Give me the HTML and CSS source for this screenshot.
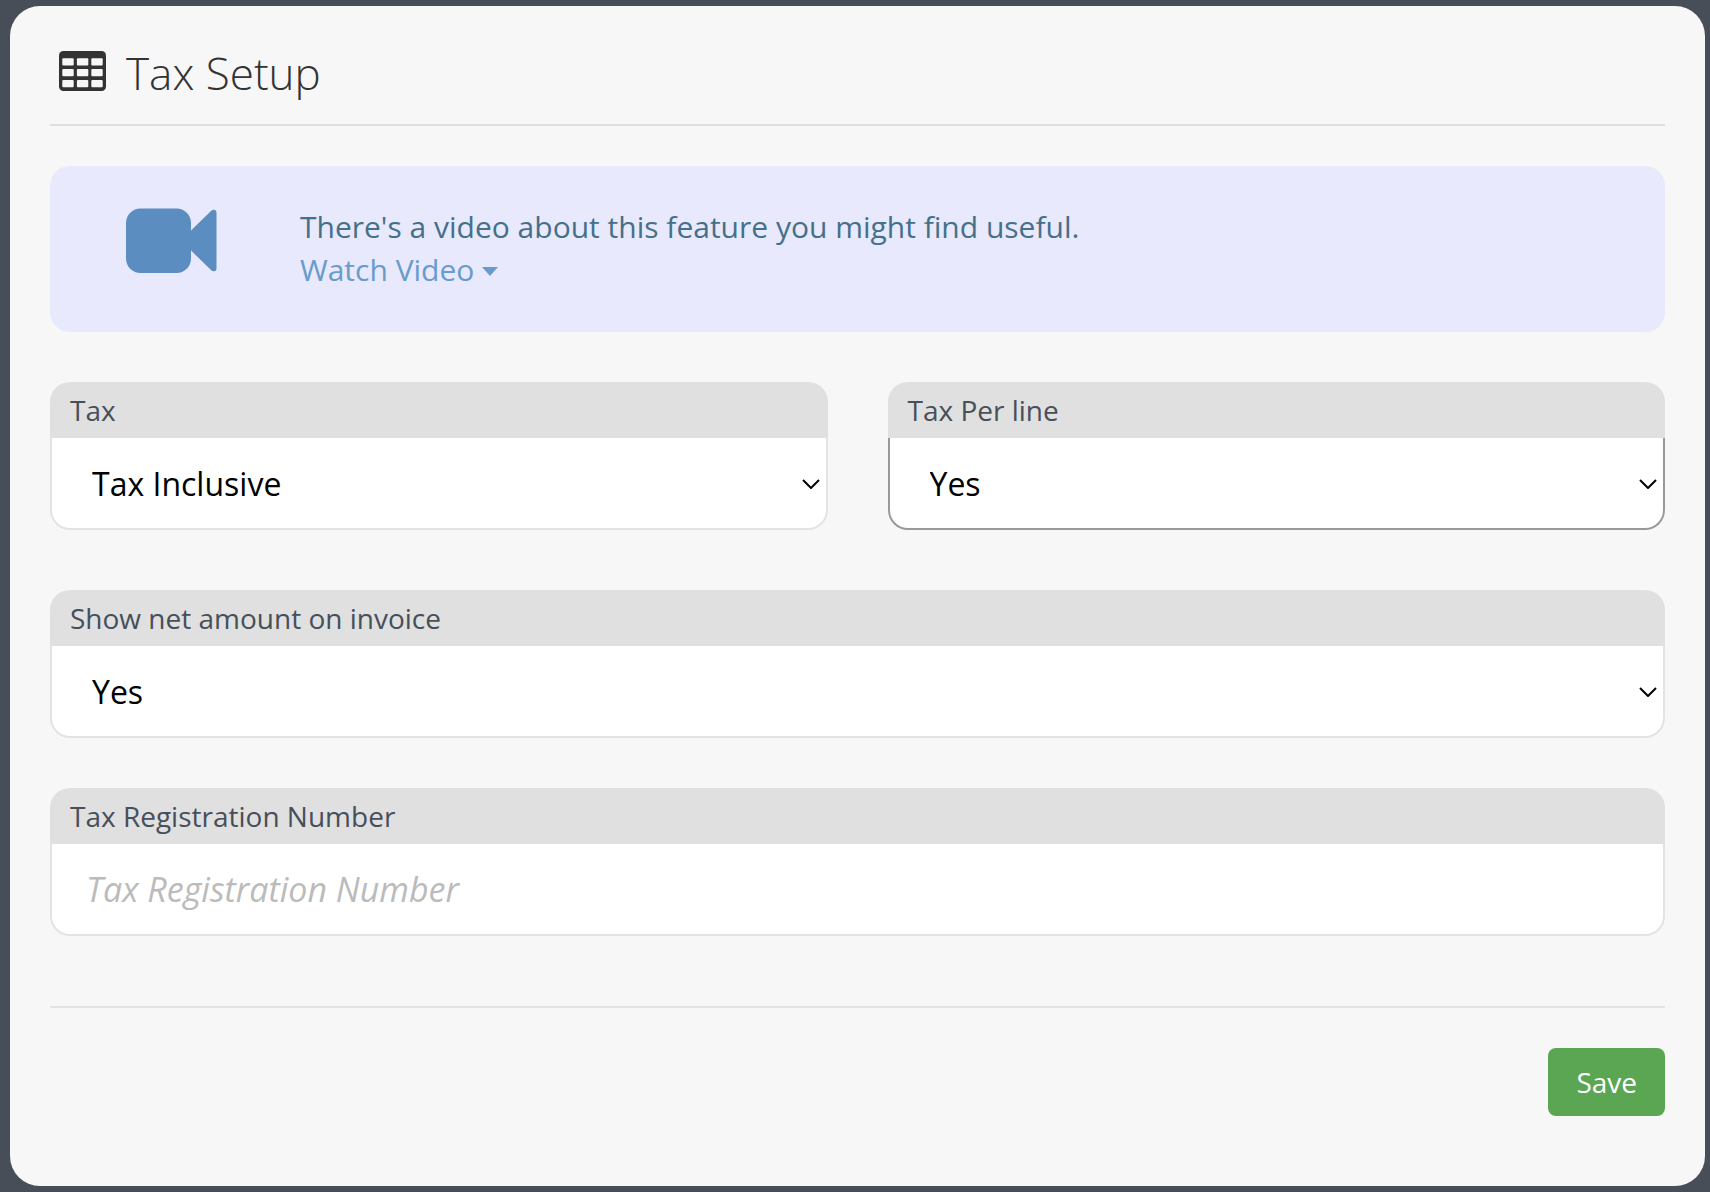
FILE: index.html
```html
<!DOCTYPE html>
<html lang="en">
<head>
    <meta charset="UTF-8">
    <meta name="viewport" content="width=device-width, initial-scale=1.0">
    <title>Tax Setup</title>
    <link rel="stylesheet" href="styles.css">
</head>
<body>
    <main class="panel">
        <header class="panel-header">
            <svg class="table-icon" viewBox="0 0 47 40" aria-hidden="true">
                <rect fill="currentColor" width="47" height="40" rx="4.500"/>
                <g fill="#f7f7f7">
                    <rect x="3.300" y="7.300" width="11.400" height="7.200" rx="1"/>
                    <rect x="17.900" y="7.300" width="11.400" height="7.200" rx="1"/>
                    <rect x="32.300" y="7.300" width="11.400" height="7.200" rx="1"/>
                    <rect x="3.300" y="18" width="11.400" height="7.200" rx="1"/>
                    <rect x="17.900" y="18" width="11.400" height="7.200" rx="1"/>
                    <rect x="32.300" y="18" width="11.400" height="7.200" rx="1"/>
                    <rect x="3.300" y="29" width="11.400" height="7.200" rx="1"/>
                    <rect x="17.900" y="29" width="11.400" height="7.200" rx="1"/>
                    <rect x="32.300" y="29" width="11.400" height="7.200" rx="1"/>
                </g>
            </svg>
            <h1>Tax Setup</h1>
        </header>

        <section class="video-info">
            <svg class="video-icon" viewBox="0 0 91 65" aria-hidden="true">
                <rect fill="currentColor" width="65" height="64.500" y="0.500" rx="14.500"/>
                <path fill="currentColor" d="M64 23.500 85.500 2.500Q87.500 1 89.500 2.200Q90.500 3 90.500 4.500V60.500Q90.500 62 89.500 62.800Q87.500 64 85.500 62.500L64 41.500z"/>
            </svg>
            <div class="video-text">
                <p>There's a video about this feature you might find useful.</p>
                <a href="#" class="video-link">Watch Video <span class="caret"></span></a>
            </div>
        </section>

        <form id="tax-form">
            <div class="row">
                <div class="field">
                    <label for="tax">Tax</label>
                    <select id="tax" name="tax">
                        <option selected>Tax Inclusive</option>
                        <option>Tax Exclusive</option>
                    </select>
                </div>
                <div class="field active">
                    <label for="tax-per-line">Tax Per line</label>
                    <select id="tax-per-line" name="tax_per_line">
                        <option selected>Yes</option>
                        <option>No</option>
                    </select>
                </div>
            </div>

            <div class="field">
                <label for="show-net">Show net amount on invoice</label>
                <select id="show-net" name="show_net">
                    <option selected>Yes</option>
                    <option>No</option>
                </select>
            </div>

            <div class="field">
                <label for="tax-number">Tax Registration Number</label>
                <input type="text" id="tax-number" name="tax_number" placeholder="Tax Registration Number">
            </div>

            <div class="form-footer">
                <button type="submit" class="save-button">Save</button>
            </div>
        </form>
    </main>
</body>
</html>
```

FILE: styles.css
```css
* {
    box-sizing: border-box;
}

body {
    margin: 0;
    padding: 6px 5px 6px 10px;
    min-height: 100vh;
    font-family: "Open Sans", "Noto Sans", sans-serif;
    background-color: #474e58;
}

.panel {
    padding: 34px 40px 70px;
    border-radius: 30px;
    background-color: #f7f7f7;
}

.panel-header {
    display: flex;
    align-items: center;
    gap: 20px;
    height: 86px;
    padding: 0 9px 20px;
    border-bottom: 2px solid #dfdfdf;
    color: #333;
}

.table-icon {
    width: 47px;
    height: 40px;
    margin-bottom: 2px;
}

h1 {
    margin: 2px 0 0;
    font-size: 44px;
    font-weight: 300;
    line-height: 60px;
}

/* Video notice */
.video-info {
    display: flex;
    align-items: flex-start;
    gap: 83px;
    margin: 40px 0 50px;
    padding: 39px 76px 41px;
    border-radius: 20px;
    background-color: #e8e9fc;
    font-size: 30px;
    line-height: 43px;
    color: #45708a;
}

.video-icon {
    flex-shrink: 0;
    width: 91px;
    height: 65px;
    margin-top: 3px;
    color: #5b8dc1;
}

.video-text p {
    margin: 0;
}

.video-link {
    display: inline-flex;
    align-items: center;
    gap: 8px;
    color: #699bcd;
    text-decoration: none;
}

.caret {
    margin-top: 4px;
    border-top: 9px solid;
    border-left: 8px solid transparent;
    border-right: 8px solid transparent;
}

/* Form fields */
.row {
    display: grid;
    grid-template-columns: 1fr 1fr;
    gap: 60px;
    margin-bottom: 60px;
}

.field + .field {
    margin-top: 50px;
}

.row .field {
    margin-top: 0;
}

.field label {
    display: block;
    padding: 0 20px;
    border-radius: 20px 20px 0 0;
    background-color: #e0e0e0;
    font-size: 28px;
    line-height: 56px;
    color: #474f5b;
}

.field select,
.field input {
    display: block;
    width: 100%;
    height: 92px;
    margin: 0;
    border: 2px solid #e3e3e3;
    border-top: 0;
    border-radius: 0 0 20px 20px;
    outline: none;
    background-color: #fff;
    font-family: inherit;
    font-size: 32px;
    color: #000;
}

.field select {
    appearance: none;
    padding: 0 40px;
    background-image: url("data:image/svg+xml,%3Csvg xmlns='http://www.w3.org/2000/svg' width='18' height='12' fill='none' stroke='%23000' stroke-width='2'%3E%3Cpath d='M1 3l8 8 8-8'/%3E%3C/svg%3E");
    background-repeat: no-repeat;
    background-position: right 6px center;
}

.field input {
    padding: 0 34px;
}

.field input::placeholder {
    font-size: 34px;
    font-style: italic;
    color: #bbb;
    opacity: 1;
}

.field.active select {
    border-color: #999;
}

.form-footer {
    display: flex;
    justify-content: flex-end;
    margin-top: 70px;
    padding-top: 40px;
    border-top: 2px solid #e3e3e3;
}

.save-button {
    height: 68px;
    padding: 0 28px;
    border: 0;
    border-radius: 8px;
    background-color: #5ba653;
    font-family: inherit;
    font-size: 28px;
    color: #fff;
    cursor: pointer;
}
```
